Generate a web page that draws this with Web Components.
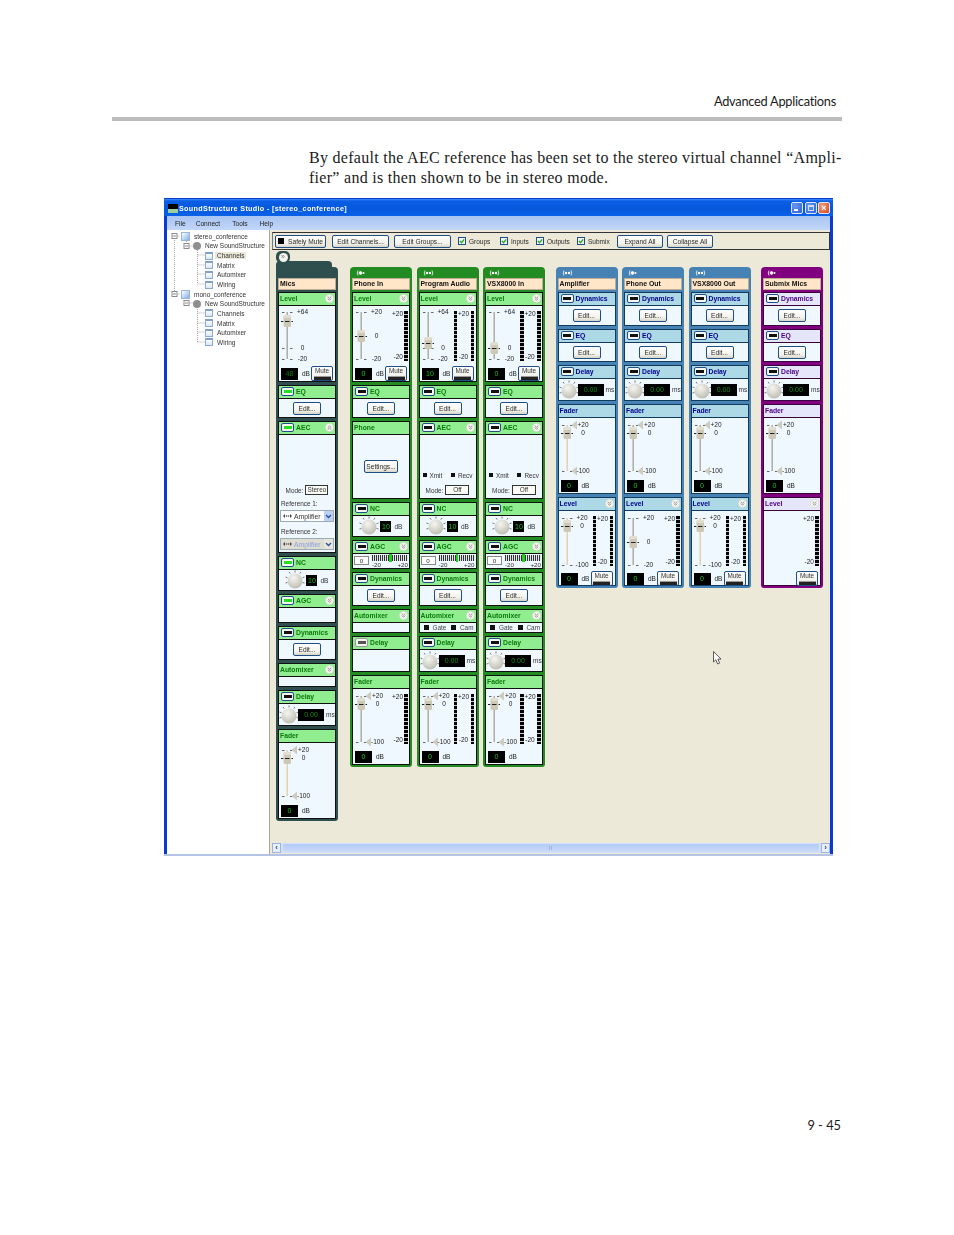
<!DOCTYPE html>
<html>
<head>
<meta charset="utf-8">
<title>SoundStructure Studio</title>
<style>
  html, body { margin: 0; background: #fff; }
</style>
</head>
<body>
<pdf-page heading="Advanced Applications" folio="9 - 45">
  <span slot="para">By default the AEC reference has been set to the stereo virtual channel “Ampli-<br>fier” and is then shown to be in stereo mode.</span>
  <studio-window slot="shot" caption="SoundStructure Studio - [stereo_conference]">
    <tree-view slot="tree"></tree-view>
    <tool-bar slot="toolbar"></tool-bar>

    <channel-strip kind="mics" name="Mics" style="margin-right:1.5px">
      <strip-section title="Level" chevron h="90"><level-control marks="+64:6 0:42 -20:53" thumb="15" value="48" dim mute></level-control></strip-section>
      <strip-section title="EQ" led="on" h="33"><edit-body></edit-body></strip-section>
      <strip-section title="AEC" led="on" chevron="up" h="132"><aec-panel mode="Stereo" refs></aec-panel></strip-section>
      <strip-section title="NC" led="on" h="35"><knob-row value="10" unit="dB"></knob-row></strip-section>
      <strip-section title="AGC" led="on" chevron h="29"></strip-section>
      <strip-section title="Dynamics" led h="34"><edit-body></edit-body></strip-section>
      <strip-section title="Automixer" chevron h="24"></strip-section>
      <strip-section title="Delay" led h="36"><knob-row value="0.00" unit="ms" wide dim></knob-row></strip-section>
      <strip-section title="Fader" h="90"><level-control marks="+20:7 0:15 -100:53" thumb="15" value="0" tri amber></level-control></strip-section>
    </channel-strip>

    <strip-group>
      <channel-strip kind="green" name="Phone In" dots="1">
        <strip-section title="Level" chevron h="90"><level-control marks="+20:6 0:30 -20:53" thumb="30" value="0" meters="1" mute></level-control></strip-section>
        <strip-section title="EQ" led h="33"><edit-body></edit-body></strip-section>
        <strip-section title="Phone" h="78"><edit-body label="Settings..."></edit-body></strip-section>
        <strip-section title="NC" led h="35"><knob-row value="10" unit="dB"></knob-row></strip-section>
        <strip-section title="AGC" led chevron h="29"><agc-row></agc-row></strip-section>
        <strip-section title="Dynamics" led h="34"><edit-body></edit-body></strip-section>
        <strip-section title="Automixer" chevron h="24"></strip-section>
        <strip-section title="Delay" led="off" h="36"></strip-section>
        <strip-section title="Fader" h="90"><level-control marks="+20:7 0:15 -100:53" thumb="15" value="0" tri meters="1"></level-control></strip-section>
      </channel-strip>
      <channel-strip kind="green" name="Program Audio" dots="2">
        <strip-section title="Level" chevron h="90"><level-control marks="+64:6 0:42 -20:53" thumb="37" value="10" meters="2" mute></level-control></strip-section>
        <strip-section title="EQ" led h="33"><edit-body></edit-body></strip-section>
        <strip-section title="AEC" led chevron h="78"><aec-panel mode="Off" xmit></aec-panel></strip-section>
        <strip-section title="NC" led h="35"><knob-row value="10" unit="dB"></knob-row></strip-section>
        <strip-section title="AGC" led chevron h="29"><agc-row></agc-row></strip-section>
        <strip-section title="Dynamics" led h="34"><edit-body></edit-body></strip-section>
        <strip-section title="Automixer" chevron h="24"><gate-row></gate-row></strip-section>
        <strip-section title="Delay" led h="36"><knob-row value="0.00" unit="ms" wide dim></knob-row></strip-section>
        <strip-section title="Fader" h="90"><level-control marks="+20:7 0:15 -100:53" thumb="15" value="0" tri meters="2"></level-control></strip-section>
      </channel-strip>
      <channel-strip kind="green" name="VSX8000 In" dots="2">
        <strip-section title="Level" chevron h="90"><level-control marks="+64:6 0:42 -20:53" thumb="42" value="0" meters="2" mute></level-control></strip-section>
        <strip-section title="EQ" led h="33"><edit-body></edit-body></strip-section>
        <strip-section title="AEC" led chevron h="78"><aec-panel mode="Off" xmit></aec-panel></strip-section>
        <strip-section title="NC" led h="35"><knob-row value="10" unit="dB"></knob-row></strip-section>
        <strip-section title="AGC" led chevron h="29"><agc-row></agc-row></strip-section>
        <strip-section title="Dynamics" led h="34"><edit-body></edit-body></strip-section>
        <strip-section title="Automixer" chevron h="24"><gate-row></gate-row></strip-section>
        <strip-section title="Delay" led h="36"><knob-row value="0.00" unit="ms" wide dim></knob-row></strip-section>
        <strip-section title="Fader" h="90"><level-control marks="+20:7 0:15 -100:53" thumb="15" value="0" tri meters="2"></level-control></strip-section>
      </channel-strip>
    </strip-group>

    <strip-group>
      <channel-strip kind="blue" name="Amplifier" dots="2">
        <strip-section title="Dynamics" led h="34"><edit-body></edit-body></strip-section>
        <strip-section title="EQ" led h="33"><edit-body></edit-body></strip-section>
        <strip-section title="Delay" led h="36"><knob-row value="0.00" unit="ms" wide dim></knob-row></strip-section>
        <strip-section title="Fader" h="90"><level-control marks="+20:7 0:15 -100:53" thumb="15" value="0" tri amber></level-control></strip-section>
        <strip-section title="Level" chevron h="89"><level-control marks="+20:7 0:15 -100:54" thumb="15" value="0" meters="2" mute amber></level-control></strip-section>
      </channel-strip>
      <channel-strip kind="blue" name="Phone Out" dots="1">
        <strip-section title="Dynamics" led h="34"><edit-body></edit-body></strip-section>
        <strip-section title="EQ" led h="33"><edit-body></edit-body></strip-section>
        <strip-section title="Delay" led h="36"><knob-row value="0.00" unit="ms" wide dim></knob-row></strip-section>
        <strip-section title="Fader" h="90"><level-control marks="+20:7 0:15 -100:53" thumb="15" value="0" tri></level-control></strip-section>
        <strip-section title="Level" chevron h="89"><level-control marks="+20:7 0:31 -20:54" thumb="31" value="0" meters="1" mute></level-control></strip-section>
      </channel-strip>
      <channel-strip kind="blue" name="VSX8000 Out" dots="2">
        <strip-section title="Dynamics" led h="34"><edit-body></edit-body></strip-section>
        <strip-section title="EQ" led h="33"><edit-body></edit-body></strip-section>
        <strip-section title="Delay" led h="36"><knob-row value="0.00" unit="ms" wide dim></knob-row></strip-section>
        <strip-section title="Fader" h="90"><level-control marks="+20:7 0:15 -100:53" thumb="15" value="0" tri></level-control></strip-section>
        <strip-section title="Level" chevron h="89"><level-control marks="+20:7 0:15 -100:54" thumb="15" value="0" meters="2" mute amber></level-control></strip-section>
      </channel-strip>
    </strip-group>

    <channel-strip kind="purple" name="Submix Mics" dots="1">
      <strip-section title="Dynamics" led h="34"><edit-body></edit-body></strip-section>
      <strip-section title="EQ" led h="33"><edit-body></edit-body></strip-section>
      <strip-section title="Delay" led h="36"><knob-row value="0.00" unit="ms" wide dim></knob-row></strip-section>
      <strip-section title="Fader" h="90"><level-control marks="+20:7 0:15 -100:53" thumb="15" value="0" tri></level-control></strip-section>
      <strip-section title="Level" chevron h="89"><level-control meters="1" mute noslider></level-control></strip-section>
    </channel-strip>
  </studio-window>
</pdf-page>

<script>
const UI_FONT = '"Liberation Sans", Arial, sans-serif'

// small helper so every component gets its own template
function makeTemplate(html) {
  const t = document.createElement('template')
  t.innerHTML = html
  return t
}

class Base extends HTMLElement {
  constructor() {
    super()
    this.attachShadow({ mode: 'open' }).appendChild(this.constructor.template.content.cloneNode(true))
  }
  get $() {
    return this.shadowRoot
  }
}

class PdfPage extends Base {
  static template = makeTemplate(`
    <style>
      :host { display: block; box-sizing: border-box; width: 954px; height: 1235px; padding: 0 112px; overflow: hidden; }
      .head { height: 117px; box-sizing: border-box; display: flex; justify-content: flex-end; align-items: flex-end; padding: 0 6px 8px 0;
        font: 12.8px/16px Lato, sans-serif; letter-spacing: -.02em; color: #1a1a1a; }
      .rule { height: 4px; background: #bcbcbc; }
      .para { margin: 27px 0 0 197px; font: 16px/20px "Liberation Serif", serif; letter-spacing: .29px; color: #1a1a1a; white-space: nowrap; }
      .shot { margin: 10px 0 0 52px; }
      .folio { margin-top: 262px; text-align: right; padding-right: 1px; font: 12.8px/14px Lato, sans-serif; color: #1a1a1a; }
    </style>
    <div class="head"></div>
    <div class="rule"></div>
    <div class="para"><slot name="para"></slot></div>
    <div class="shot"><slot name="shot"></slot></div>
    <div class="folio"></div>
  `)
  connectedCallback() {
    this.$.querySelector('.head').textContent = this.getAttribute('heading')
    this.$.querySelector('.folio').textContent = this.getAttribute('folio')
  }
}

class StudioWindow extends Base {
  static template = makeTemplate(`
    <style>
      :host { display: flex; flex-direction: column; box-sizing: border-box; width: 669px; height: 658px;
        background: linear-gradient(#0a3ad0 calc(100% - 2px), #b4c3e4 0); font-family: ${UI_FONT}; color: #222; filter: blur(.3px); position: relative; }
      .title { height: 18px; box-sizing: border-box; padding: 2px 3px 0 4px; flex: none; display: flex; align-items: center;
        background: linear-gradient(#0a3ad0 0 1px, #3d8cf5 1px, #0a5fe6 3px, #0558dc 60%, #0a62e8 100%); }
      .appicon { width: 10px; height: 9px; margin-right: 1px; background: linear-gradient(#000 60%, #9ad0a0 60%); }
      .caption { color: #fff; font-size: 7.2px; font-weight: bold; letter-spacing: .33px; white-space: nowrap; }
      .ctl { width: 12px; height: 12px; margin-left: 1.5px; border: 1px solid #dfe8fb; border-radius: 2px; box-sizing: border-box;
        background: radial-gradient(circle at 30% 30%, #6a97f5, #2a5fd8); position: relative; }
      .ctl.min { margin-left: auto; }
      .ctl.min::after { content: ""; position: absolute; left: 2px; bottom: 2px; width: 4px; height: 2px; background: #fff; }
      .ctl.max::after { content: ""; position: absolute; inset: 2px; border: 1px solid #cfe0ff; border-top-width: 2px; }
      .ctl.close { background: radial-gradient(circle at 30% 30%, #f0a080, #d8431a); color: #fff; font: bold 9px/10px ${UI_FONT}; text-align: center; }
      .frame { flex: 1; display: flex; flex-direction: column; margin: 0 3px 2px; min-height: 0; }
      .menu { height: 14px; flex: none; display: flex; align-items: center; background: linear-gradient(#a8c4f2, #c2d7f9);
        font-size: 6.6px; color: #222; }
      .menu span:nth-child(1) { margin-left: 8px; }
      .menu span:nth-child(2) { margin-left: 10px; }
      .menu span:nth-child(3) { margin-left: 12px; }
      .menu span:nth-child(4) { margin-left: 12px; }
      .split { flex: 1; display: grid; grid-template-columns: 102px 3px 558px; min-height: 0; background: #ece9d8; }
      .bar { background: #ece9d8; border-left: 1px solid #aca899; }
      .tree { background: #fff; min-height: 0; }
      .main { display: flex; flex-direction: column; min-height: 0; padding-top: 2px; background: #ece9d8; }
      .canvas { position: relative; flex: 1; display: flex; align-items: flex-start; gap: 10.5px; padding: 17px 0 0 4px; min-height: 0; }
      .cursor { position: absolute; left: 441px; top: 401px; }
      .scroll { flex: none; height: 10px; margin-bottom: 1px; display: flex; background: #d3e0fa; }
      .sb { width: 9px; flex: none; background: #e8eefc; border: 1px solid #9db2de; box-sizing: border-box; color: #1f4a8a;
        font: bold 8px/8px ${UI_FONT}; text-align: center; }
      .thumb { flex: 1; margin: 1px 2px; border-radius: 1px; background: linear-gradient(#b4caf5, #cbdaf9); display: flex; align-items: center; justify-content: center; }
      .grip { width: 4px; height: 4px; background: repeating-linear-gradient(90deg, #9fb6e4 0 1px, transparent 1px 2px); }
    </style>
    <div class="title">
      <div class="appicon"></div><div class="caption"></div>
      <div class="ctl min"></div><div class="ctl max"></div><div class="ctl close">×</div>
    </div>
    <div class="frame">
      <div class="menu"><span>File</span><span>Connect</span><span>Tools</span><span>Help</span></div>
      <div class="split">
        <div class="tree"><slot name="tree"></slot></div>
        <div class="bar"></div>
        <div class="main">
          <slot name="toolbar"></slot>
          <div class="canvas">
            <slot></slot>
            <svg class="cursor" width="9" height="14" viewBox="0 0 9 14"><path d="M.5.5V11l2.4-2.2L4.6 13l2-.9-1.7-4H8z" fill="#fff" stroke="#333" stroke-width=".8"/></svg>
          </div>
          <div class="scroll"><div class="sb">‹</div><div class="thumb"><div class="grip"></div></div><div class="sb">›</div></div>
        </div>
      </div>
    </div>
  `)
  connectedCallback() {
    this.$.querySelector('.caption').textContent = this.getAttribute('caption')
  }
}

class TreeView extends Base {
  static template = makeTemplate(`
    <style>
      :host { display: block; position: relative; height: 100%; padding-top: 1.5px; box-sizing: border-box; font-size: 6.5px; color: #333; }
      .row { position: relative; height: 9.65px; display: flex; align-items: center; white-space: nowrap; z-index: 1; }
      .pg { width: 8px; height: 8px; box-sizing: border-box; border: 1px solid #8fa9cf; background: linear-gradient(#fff, #d8e6f6); border-top: 2px solid #7fa0cf; margin-right: 4px; flex: none; }
      .doc { width: 9px; height: 9px; box-sizing: border-box; border: 1px solid #9ab3d6; background: linear-gradient(135deg, #fff, #7fb0e8); margin-right: 4px; flex: none; }
      .dot { width: 8px; height: 8px; border-radius: 50%; background: #8f8f8f; margin-right: 4px; flex: none; }
      .sel { background: #ece9d8; padding: 0 2px; margin-left: -2px; }
      svg { position: absolute; left: 0; top: 0; }
    </style>
    <svg width="102" height="120" fill="none" stroke="#a8a8a8" stroke-dasharray="1 1" stroke-width="1">
      <path d="M7.5 6V64M7.5 6H13M7.5 64H13"/>
      <path d="M19.5 11V16M19.5 16H26M19.5 68V73M19.5 73H26"/>
      <path d="M30.5 16V54M30.5 25H38M30.5 35H38M30.5 44H38M30.5 54H38"/>
      <path d="M30.5 73V112M30.5 83H38M30.5 93H38M30.5 102H38M30.5 112H38"/>
      <g stroke-dasharray="none" stroke="#8b8b8b" fill="#fff">
        <rect x="5" y="3.5" width="5" height="5"/><path d="M6 6H9"/>
        <rect x="17" y="13.5" width="5" height="5"/><path d="M18 16H21"/>
        <rect x="5" y="61.5" width="5" height="5"/><path d="M6 64H9"/>
        <rect x="17" y="70.5" width="5" height="5"/><path d="M18 73H21"/>
      </g>
    </svg>
    <div class="rows"></div>
  `)
  connectedCallback() {
    const kids = ['Channels', 'Matrix', 'Automixer', 'Wiring']
    const rows = []
    ;['stereo_conference', 'mono_conference'].forEach((root, r) => {
      rows.push(`<div class="row" style="padding-left:14px"><i class="doc"></i>${root}</div>`)
      rows.push(`<div class="row" style="padding-left:26px"><i class="dot"></i>New SoundStructure</div>`)
      kids.forEach((k, i) => {
        const sel = r === 0 && i === 0
        rows.push(`<div class="row" style="padding-left:38px"><i class="pg"></i><span class="${sel ? 'sel' : ''}">${k}</span></div>`)
      })
    })
    this.$.querySelector('.rows').innerHTML = rows.join('')
  }
}

class XpButton extends Base {
  static template = makeTemplate(`
    <style>
      :host { display: inline-flex; align-items: center; justify-content: center; box-sizing: border-box; flex: none; height: 13px;
        border: 1px solid #1d4f86; border-radius: 2px; background: linear-gradient(#fff, #f2f1ea 70%, #d8d4c6);
        font: 6.6px ${UI_FONT}; color: #2a2a2a; white-space: nowrap; }
    </style>
    <slot></slot>
  `)
}

class XpCheck extends Base {
  static template = makeTemplate(`
    <style>
      :host { display: inline-flex; align-items: center; flex: none; font: 6.5px ${UI_FONT}; color: #2a2a2a; }
      .box { width: 6px; height: 6px; border: 1px solid #1d4f86; background: #f4f4ee; margin-right: 3px; flex: none; }
      svg { display: block; }
    </style>
    <div class="box"><svg width="6" height="6" viewBox="0 0 7 7"><path d="M1 3.5L3 5.5 6 1.5" fill="none" stroke="#1fa51f" stroke-width="1.4"/></svg></div>
    <slot></slot>
  `)
}

class ToolBar extends Base {
  static template = makeTemplate(`
    <style>
      :host { display: flex; align-items: center; flex: none; box-sizing: border-box; height: 18px; padding-left: 2px;
        border: 1px solid #333; border-left-color: #777; background: #ece9d8; }
      .sq { width: 6px; height: 6px; background: #000; margin-right: 4px; }
    </style>
    <xp-button style="width:51px"><span class="sq"></span>Safely Mute</xp-button>
    <xp-button style="width:57px;margin-left:6px">Edit Channels...</xp-button>
    <xp-button style="width:57px;margin-left:5px">Edit Groups...</xp-button>
    <xp-check style="width:42px;margin-left:7px">Groups</xp-check>
    <xp-check style="width:36px">Inputs</xp-check>
    <xp-check style="width:41px">Outputs</xp-check>
    <xp-check style="width:40px">Submix</xp-check>
    <xp-button style="width:46px">Expand All</xp-button>
    <xp-button style="width:46px;margin-left:4px">Collapse All</xp-button>
  `)
}

class StripGroup extends Base {
  static template = makeTemplate(`
    <style>:host { display: flex; align-items: flex-start; gap: 4.5px; }</style>
    <slot></slot>
  `)
}

class ChannelStrip extends Base {
  static template = makeTemplate(`
    <style>
      :host { --frame: #228b22; --head: #90ee90; --ink: #0a7a0a; --edge: #0c2f0c; --line: #111;
        display: flex; flex-direction: column; gap: 3px; position: relative; box-sizing: border-box; width: 62px; flex: none;
        padding: 11px 2px 2px; border-radius: 4px 4px 3px 3px; background: var(--frame); }
      :host([kind=mics]) { --frame: #2f4f4f; --line: #111; }
      :host([kind=blue]) { --frame: #4682b4; --head: #add8e6; --ink: #00008b; --line: #123a5c; }
      :host([kind=purple]) { --frame: #800080; --head: #e6e6fa; --ink: #4b0082; --line: #3a003a; }
      .name { box-sizing: border-box; height: 12px; margin-bottom: -1px; padding-left: 1px; background: #ffe6c8; border: 1px solid rgba(0,0,0,.25);
        font: bold 6.9px/10px ${UI_FONT}; color: #111; white-space: nowrap; overflow: hidden; }
      .dots { position: absolute; left: 6px; top: 3px; }
      .tab { display: none; position: absolute; left: 0; top: -6px; width: 56px; height: 10px; border-radius: 4px 4px 0 0; background: var(--frame); }
      .pill { display: none; position: absolute; left: 0; top: -16px; width: 14px; height: 12px; border-radius: 5px; background: var(--frame); }
      .pill::after { content: "»"; position: absolute; left: 2.5px; top: 1.5px; width: 9px; height: 9px; border-radius: 50%; background: #f4f4ee;
        font: 7px/8px ${UI_FONT}; color: #777; text-align: center; }
      :host([kind=mics]) .tab, :host([kind=mics]) .pill { display: block; }
    </style>
    <div class="tab"></div><div class="pill"></div>
    <svg class="dots" width="14" height="6" viewBox="0 0 14 6" fill="none" stroke="#fff" stroke-width=".8"></svg>
    <div class="name"></div>
    <slot></slot>
  `)
  connectedCallback() {
    this.$.querySelector('.name').textContent = this.getAttribute('name')
    const n = +this.getAttribute('dots') || 0
    const svg = this.$.querySelector('.dots')
    if (n === 1) svg.innerHTML = '<path d="M2 .5Q.5 3 2 5.5"/><circle cx="4.5" cy="3" r="1.4" fill="#fff"/><circle cx="7.5" cy="3" r="1" fill="#fff" stroke="none"/>'
    if (n === 2) svg.innerHTML = '<path d="M2 .5Q.5 3 2 5.5M9 .5Q10.5 3 9 5.5"/><circle cx="4" cy="3" r="1.2" fill="#fff" stroke="none"/><circle cx="7" cy="3" r="1.2" fill="#fff" stroke="none"/>'
  }
}

class StripSection extends Base {
  static template = makeTemplate(`
    <style>
      :host { display: flex; flex-direction: column; box-sizing: border-box; border: 1px solid var(--line); background: #f0f8ff; flex: none; }
      .hd { height: 13px; box-sizing: border-box; flex: none; display: flex; align-items: center; padding: 0 1px 1px; background: var(--head);
        border-bottom: 1px solid var(--line); font: bold 6.8px ${UI_FONT}; color: var(--ink); white-space: nowrap; }
      .led { width: 13px; height: 9px; box-sizing: border-box; margin: 0 2px 0 1px; border: 1px solid #1d4f86; border-radius: 2px; background: #f6f6f0; padding: 2px 1.5px; flex: none; }
      .led i { display: block; height: 100%; background: #111; }
      :host([led=on]) .led i { background: #22e022; }
      :host([led=off]) .led { border-color: #999; }
      :host([led=off]) .led i { background: #555; }
      .chev { margin-left: auto; flex: none; display: block; }
      .bd { flex: 1; min-height: 0; position: relative; }
    </style>
    <div class="hd"></div>
    <div class="bd"><slot></slot></div>
  `)
  connectedCallback() {
    this.style.height = this.getAttribute('h') + 'px'
    let html = ''
    if (this.hasAttribute('led')) html += '<div class="led"><i></i></div>'
    html += `<span>${this.getAttribute('title')}</span>`
    const ch = this.getAttribute('chevron')
    if (ch !== null) {
      const path = ch === 'up' ? 'M2.7 4.6L4.5 3 6.3 4.6M2.7 6.6L4.5 5 6.3 6.6' : 'M2.7 2.6L4.5 4.2 6.3 2.6M2.7 4.6L4.5 6.2 6.3 4.6'
      html += `<svg class="chev" width="9" height="9" viewBox="0 0 9 9"><circle cx="4.5" cy="4.5" r="4.2" fill="#f5f5f0" stroke="#c8c8c0" stroke-width=".5"/><path d="${path}" fill="none" stroke="#8f8f8a" stroke-width=".9"/></svg>`
    }
    this.$.querySelector('.hd').innerHTML = html
    this.removeAttribute('title')
  }
}

class EditBody extends Base {
  static template = makeTemplate(`
    <style>
      :host { display: flex; height: 100%; align-items: center; justify-content: center; }
      xp-button { width: 28px; }
    </style>
    <xp-button></xp-button>
  `)
  connectedCallback() {
    const label = this.getAttribute('label') || 'Edit...'
    const btn = this.$.querySelector('xp-button')
    btn.textContent = label
    if (this.hasAttribute('label')) btn.style.width = '34px'
  }
}

class LevelControl extends Base {
  static template = makeTemplate(`
    <style>
      :host { display: block; font: 6.5px ${UI_FONT}; color: #222; }
      .scale { position: relative; height: 60px; }
      .scale svg { position: absolute; left: 0; top: 0; }
      .lab { position: absolute; line-height: 8px; height: 8px; white-space: nowrap; }
      .meter { position: absolute; top: 5px; width: 3.5px; height: 50px; background: repeating-linear-gradient(#000 0 3px, #c4cad0 3px 4px); }
      .foot { display: flex; align-items: center; height: 15px; padding: 0 2px; }
      .read { width: 17px; height: 12px; background: #000; text-align: center; font: 7px/12px ${UI_FONT}; color: #18c018; margin-right: 4px; }
      .read.dim { color: #0d7a0d; }
      xp-mute { margin-left: auto; }
    </style>
    <div class="scale"></div>
    <div class="foot"></div>
  `)
  connectedCallback() {
    const scale = this.$.querySelector('.scale')
    const foot = this.$.querySelector('.foot')
    const meters = +this.getAttribute('meters') || 0
    let html = ''

    if (!this.hasAttribute('noslider')) {
      const marks = this.getAttribute('marks').split(' ').map(m => m.split(':'))
      const thumb = +this.getAttribute('thumb')
      const tri = this.hasAttribute('tri')
      const track = this.hasAttribute('amber') ? '#e0cfa6' : '#aaa69a'
      const top = +marks[0][1]
      const bottom = +marks[marks.length - 1][1]
      let g = `<rect x="7.5" y="${top}" width="1.4" height="${bottom - top}" fill="${track}"/>`
      marks.forEach(([, y], i) => {
        if (+y === thumb) return
        if (tri && i === 1) return
        g += `<path d="M3 ${+y + .5}h2.5M11 ${+y + .5}h2.5" stroke="#555" stroke-width=".9"/>`
      })
      if (tri) {
        ;[marks[0], marks[marks.length - 1]].forEach(([, y]) => {
          g += `<path d="M12.5 ${+y}L18 ${+y - 4.5}V${+y + 4.5}Z" fill="#cfcbbd"/>`
        })
      }
      // thumb with its dark centre mark
      g += `<path d="M2 ${thumb + .5}h12" stroke="#222" stroke-width="1" stroke-dasharray="2.5 1"/>`
      g += `<rect x="4.5" y="${thumb - 6}" width="7.5" height="12" rx="1.5" fill="#cdc9b6"/><rect x="4.5" y="${thumb - 6}" width="7.5" height="3" rx="1.5" fill="#e2dfd0"/>`
      g += `<path d="M6 ${thumb + .5}h4.5" stroke="#222" stroke-width="1"/>`
      html += `<svg width="30" height="60">${g}</svg>`
      marks.forEach(([t, y]) => {
        html += `<span class="lab" style="left:15px;width:${tri ? 19 : 17}px;text-align:center;top:${+y - 4}px">${t}</span>`
      })
    }

    if (meters === 2) {
      html += '<div class="meter" style="left:34px"></div><div class="meter" style="left:51px"></div>'
      html += '<span class="lab" style="left:37px;width:14px;text-align:center;top:4px">+20</span>'
      html += '<span class="lab" style="left:37px;width:14px;text-align:center;top:47px">-20</span>'
    } else if (meters === 1) {
      html += '<div class="meter" style="left:51px"></div>'
      html += '<span class="lab" style="left:36px;width:14px;text-align:right;top:4px">+20</span>'
      html += '<span class="lab" style="left:36px;width:14px;text-align:right;top:47px">-20</span>'
    }
    scale.innerHTML = html

    let f = ''
    if (this.hasAttribute('value')) {
      f += `<div class="read ${this.hasAttribute('dim') ? 'dim' : ''}">${this.getAttribute('value')}</div><span>dB</span>`
    }
    if (this.hasAttribute('mute')) f += '<xp-mute></xp-mute>'
    foot.innerHTML = f
  }
}

class XpMute extends Base {
  static template = makeTemplate(`
    <style>
      :host { display: flex; flex-direction: column; align-items: center; box-sizing: border-box; width: 22px; height: 15px;
        border: 1px solid #1d4f86; border-radius: 2px; background: linear-gradient(#fff, #ecebe2); font: 6.4px/8px ${UI_FONT}; color: #333; }
      i { display: block; width: 17px; height: 3px; margin-top: 1px; background: #222; border-top: 1px solid #999; }
    </style>
    <span>Mute</span><i></i>
  `)
}

class KnobRow extends Base {
  static template = makeTemplate(`
    <style>
      :host { display: flex; align-items: center; justify-content: center; height: 100%; font: 6.6px ${UI_FONT}; color: #333; }
      :host([wide]) { justify-content: flex-start; }
      svg { flex: none; display: block; }
      .read { width: 11px; height: 11px; background: #000; text-align: center; font: 7px/11px ${UI_FONT}; color: #18c018; margin: 0 3px 0 1px; flex: none; }
      :host([wide]) svg { margin-right: -1px; }
      :host([wide]) .read { width: 26px; margin: 0 2px 0 0; height: 12px; line-height: 12px; color: #0f8f0f; }
    </style>
    <svg width="20" height="20" viewBox="0 0 20 20">
      <defs><radialGradient id="k" cx="40%" cy="30%" r="80%"><stop offset="0" stop-color="#f6f6f2"/><stop offset="1" stop-color="#b9b7aa"/></radialGradient></defs>
      <path d="M10 .5v2M4 2l1.200 1.600M.5 7l2 .8M.5 13l2-.5M16 2l-1.200 1.600M19.500 7l-2 .8M19.500 13l-2-.5" stroke="#666" stroke-width=".9"/>
      <circle cx="10" cy="11" r="7.500" fill="url(#k)"/>
    </svg>
    <div class="read"></div><span class="unit"></span>
  `)
  connectedCallback() {
    this.$.querySelector('.read').textContent = this.getAttribute('value')
    this.$.querySelector('.unit').textContent = this.getAttribute('unit')
  }
}

class AgcRow extends Base {
  static template = makeTemplate(`
    <style>
      :host { display: flex; align-items: flex-start; padding: 1px 0 0 1px; font: 6.2px/7px ${UI_FONT}; color: #333; }
      .box { width: 15px; height: 9px; margin-top: 1px; box-sizing: border-box; border: 1px solid #888; text-align: center; line-height: 7px; background: #fff; flex: none; }
      .scale { width: 36px; margin-left: 3px; flex: none; }
      .stripes { position: relative; height: 6px; background: repeating-linear-gradient(90deg, #333 0 1px, #dfe6ec 1px 2px); }
      .stripes::after { content: ""; position: absolute; left: 17px; top: -1px; width: 2.5px; height: 8px; background: #1fd01f; }
      .nums { display: flex; justify-content: space-between; }
    </style>
    <div class="box">0</div>
    <div class="scale"><div class="stripes"></div><div class="nums"><span>-20</span><span>+20</span></div></div>
  `)
}

class GateRow extends Base {
  static template = makeTemplate(`
    <style>
      :host { display: flex; align-items: center; height: 100%; padding: 0 2px 0 4px; justify-content: space-between; font: 6.4px ${UI_FONT}; color: #444; }
      i { display: inline-block; width: 5px; height: 5px; background: #111; margin-right: 4px; }
    </style>
    <span><i></i>Gate</span><span><i></i>Cam</span>
  `)
}

class XpSelect extends Base {
  static template = makeTemplate(`
    <style>
      :host { display: flex; align-items: center; box-sizing: border-box; height: 12px; margin: 0 1px; border: 1px solid #9ab; background: #fff; font: 6.8px ${UI_FONT}; color: #333; }
      :host([disabled]) { background: #dfddd2; color: #8aa0e0; }
      .ic { width: 9px; margin: 0 2px 0 2px; flex: none; }
      .txt { flex: 1; }
      .drop { width: 9px; height: 100%; flex: none; background: #bcd0f4; display: flex; align-items: center; justify-content: center; }
      :host([disabled]) .drop { background: #e8e6dc; }
      svg { display: block; }
    </style>
    <svg class="ic" width="9" height="6" viewBox="0 0 9 6" fill="#444"><path d="M0 3l2-2v4zM9 3L7 1v4z"/><circle cx="3.500" cy="3" r=".8"/><circle cx="5.500" cy="3" r=".8"/></svg>
    <span class="txt"><slot></slot></span>
    <div class="drop"><svg width="7" height="5" viewBox="0 0 7 5"><path d="M1 1l2.500 2.500L6 1" fill="none" stroke="#2a4f9a" stroke-width="1.300"/></svg></div>
  `)
}

class AecPanel extends Base {
  static template = makeTemplate(`
    <style>
      :host { display: flex; flex-direction: column; justify-content: flex-end; height: 100%; box-sizing: border-box; padding-bottom: 2px; font: 6.4px/9px ${UI_FONT}; color: #333; }
      .mode { display: flex; align-items: center; justify-content: center; height: 10px; margin-bottom: 1px; }
      .mode b { font-weight: normal; box-sizing: border-box; height: 10px; margin-left: 2px; border: 1px solid #333; background: #fdfdf8; text-align: center; line-height: 8px; }
      .xmit { display: flex; justify-content: space-between; padding: 0 3px; margin-bottom: 5px; }
      i { display: inline-block; width: 4px; height: 4px; background: #111; margin-right: 3px; vertical-align: 1px; }
      .lab { padding-left: 2px; margin-top: 3px; height: 9px; }
      .refs { display: none; }
      xp-select { margin-top: 2px; }
    </style>
    <div class="xmit"><span><i></i>Xmit</span><span><i></i>Recv</span></div>
    <div class="mode"><span>Mode:</span><b></b></div>
    <div class="refs">
      <div class="lab">Reference 1:</div>
      <xp-select>Amplifier</xp-select>
      <div class="lab" style="margin-top:5px">Reference 2:</div>
      <xp-select disabled>Amplifier</xp-select>
    </div>
  `)
  connectedCallback() {
    const box = this.$.querySelector('.mode b')
    box.textContent = this.getAttribute('mode')
    box.style.width = this.hasAttribute('refs') ? '23px' : '24px'
    if (!this.hasAttribute('xmit')) this.$.querySelector('.xmit').style.display = 'none'
    if (this.hasAttribute('refs')) this.$.querySelector('.refs').style.display = 'block'
  }
}

customElements.define('xp-button', XpButton)
customElements.define('xp-check', XpCheck)
customElements.define('xp-mute', XpMute)
customElements.define('xp-select', XpSelect)
customElements.define('pdf-page', PdfPage)
customElements.define('studio-window', StudioWindow)
customElements.define('tree-view', TreeView)
customElements.define('tool-bar', ToolBar)
customElements.define('strip-group', StripGroup)
customElements.define('channel-strip', ChannelStrip)
customElements.define('strip-section', StripSection)
customElements.define('edit-body', EditBody)
customElements.define('level-control', LevelControl)
customElements.define('knob-row', KnobRow)
customElements.define('agc-row', AgcRow)
customElements.define('gate-row', GateRow)
customElements.define('aec-panel', AecPanel)
</script>
</body>
</html>
